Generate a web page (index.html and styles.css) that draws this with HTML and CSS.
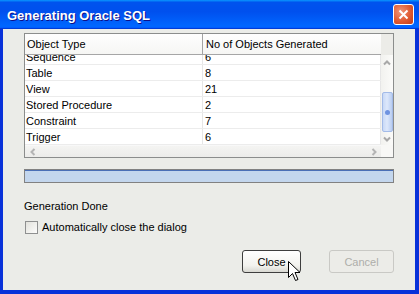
FILE: index.html
```html
<!DOCTYPE html>
<html lang="en">
  <head>
    <meta charset="UTF-8" />
    <title>Generating Oracle SQL</title>
    <link rel="stylesheet" href="styles.css">
  </head>
  <body>
    <div class="window">
      <div class="titlebar">
        <span class="title">Generating Oracle SQL</span>
        <div class="close-x">
          <svg width="11" height="11" viewBox="0 0 11 11">
            <path d="M1.5 1.5 L9.5 9.5 M9.5 1.5 L1.5 9.5" stroke="#fff" stroke-width="2" />
          </svg>
        </div>
      </div>
      <div class="content">
        <div class="table">
          <div class="table-main">
            <div class="thead">
              <div class="th col1">Object Type</div>
              <div class="th col2">No of Objects Generated</div>
            </div>
            <div class="tbody">
              <div class="rows">
                <div class="tr"><div class="td col1">Sequence</div><div class="td col2">6</div></div>
                <div class="tr"><div class="td col1">Table</div><div class="td col2">8</div></div>
                <div class="tr"><div class="td col1">View</div><div class="td col2">21</div></div>
                <div class="tr"><div class="td col1">Stored Procedure</div><div class="td col2">2</div></div>
                <div class="tr"><div class="td col1">Constraint</div><div class="td col2">7</div></div>
                <div class="tr"><div class="td col1">Trigger</div><div class="td col2">6</div></div>
              </div>
            </div>
            <div class="hscroll">
              <svg width="8" height="8" viewBox="0 0 8 8"><path d="M5.5 1 L2.5 4 L5.5 7" fill="none" stroke="#b4b4b4" stroke-width="2" /></svg>
              <svg width="8" height="8" viewBox="0 0 8 8"><path d="M2.5 1 L5.5 4 L2.5 7" fill="none" stroke="#b4b4b4" stroke-width="2" /></svg>
            </div>
          </div>
          <div class="vscroll">
            <div class="corner-top"></div>
            <div class="vtrack">
              <div class="arrow">
                <svg width="8" height="6" viewBox="0 0 8 6"><path d="M1 4.5 L4 1.5 L7 4.5" fill="none" stroke="#a8a8a8" stroke-width="2" /></svg>
              </div>
              <div class="thumb"><span class="grip"></span></div>
              <div class="arrow">
                <svg width="8" height="6" viewBox="0 0 8 6"><path d="M1 1.5 L4 4.5 L7 1.5" fill="none" stroke="#a8a8a8" stroke-width="2" /></svg>
              </div>
            </div>
            <div class="corner-bottom"></div>
          </div>
        </div>

        <div class="progress"><div class="progress-fill"></div></div>

        <div class="status">Generation Done</div>

        <label class="check-row">
          <span class="checkbox"></span>
          <span>Automatically close the dialog</span>
        </label>

        <div class="buttons">
          <button class="btn btn-close">Close</button>
          <button class="btn btn-cancel" disabled>Cancel</button>
        </div>
      </div>

      <svg class="cursor" width="13" height="21" viewBox="0 0 13 21">
        <path d="M0.5 0.5 L0.5 16.5 L4.5 12.5 L7.5 19.5 L10 18.5 L7 11.5 L12 11.5 Z" fill="#fff" stroke="#000" stroke-width="1" />
      </svg>
    </div>
  </body>
</html>
```

FILE: styles.css
```css
body {
  margin: 0;
  font-family: "Liberation Sans", Arial, sans-serif;
  font-size: 11px;
  color: #000;
}

.window {
  position: relative;
  width: 419px;
  height: 294px;
  display: flex;
  flex-direction: column;
  background: #0831d9;
  overflow: hidden;
}

.titlebar {
  height: 29px;
  flex: none;
  display: flex;
  align-items: center;
  justify-content: space-between;
  padding: 0 5px 0 7px;
  box-sizing: border-box;
  background: linear-gradient(180deg, #0997ff, #0053ee 8%, #0050ee 40%, #0066ff 88%, #0066ff 93%, #005bff 95%, #003dd7 96%, #003dd7);
}

.title {
  color: #fff;
  font-family: "Liberation Sans", Arial, sans-serif;
  font-weight: bold;
  font-size: 13px;
  text-shadow: 1px 1px #0f1089;
  margin-top: 1px;
}

.close-x {
  width: 19px;
  height: 19px;
  border: 1px solid #fff;
  border-radius: 3px;
  display: flex;
  align-items: center;
  justify-content: center;
  background: radial-gradient(circle at 35% 35%, #f0967a, #e05a32 55%, #c23b17);
  margin-top: -1px;
}

.content {
  flex: 1;
  margin: 0 4px 4px 3px;
  background: #ebece8;
  padding: 4px 21px 0 21px;
  display: flex;
  flex-direction: column;
}

/* table */

.table {
  display: flex;
  height: 123px;
  border: 1px solid #8b8d8c;
  background: #fff;
}

.table-main {
  width: 356px;
  display: flex;
  flex-direction: column;
}

.thead {
  display: flex;
  height: 20px;
  border-bottom: 1px solid #a6a6a6;
  background: linear-gradient(180deg, #fefefe, #f6f6f4);
}

.th {
  padding-left: 2px;
  line-height: 21px;
  box-sizing: border-box;
}

.th.col1 {
  width: 178px;
  border-right: 1px solid #a3a3a3;
}

.th.col2 {
  flex: 1;
  padding-left: 3px;
}

.tbody {
  height: 90px;
  overflow: hidden;
}

.rows {
  margin-top: -6px;
}

.tr {
  display: flex;
  height: 16px;
  border-bottom: 1px solid #ececec;
  box-sizing: border-box;
}

.td {
  padding-left: 1px;
  line-height: 17px;
  box-sizing: border-box;
}

.td.col1 {
  width: 178px;
  border-right: 1px solid #e6e6e6;
}

.td.col2 {
  flex: 1;
  padding-left: 2px;
  border-right: 1px solid #e6e6e6;
}

.hscroll {
  height: 12px;
  display: flex;
  align-items: center;
  justify-content: space-between;
  padding: 0 3px 0 4px;
  background: linear-gradient(180deg, #f4f4f2, #ececea);
  border-top: 1px solid #f8f8f8;
  box-sizing: border-box;
}

.vscroll {
  width: 12px;
  display: flex;
  flex-direction: column;
}

.corner-top {
  height: 21px;
  background: #ecece8;
  box-sizing: border-box;
}

.vtrack {
  height: 90px;
  display: flex;
  flex-direction: column;
  align-items: center;
  background: linear-gradient(90deg, #f2f2ef, #fbfbf9);
}

.arrow {
  height: 12px;
  display: flex;
  align-items: center;
  justify-content: center;
}

.arrow:first-child {
  margin-top: 2px;
  margin-bottom: 23px;
}

.arrow:last-child {
  margin-top: 1px;
}

.thumb {
  width: 11px;
  height: 41px;
  margin-left: 1px;
  box-sizing: border-box;
  border: 1px solid #a3bbe8;
  border-radius: 2px;
  background: linear-gradient(90deg, #c8d9f6, #dde8fb 45%, #b9cdf1);
  display: flex;
  align-items: center;
  justify-content: center;
}

.grip {
  width: 5px;
  height: 5px;
  border-radius: 50%;
  background: #6f93e0;
}

.corner-bottom {
  height: 12px;
  background: #f8f8f6;
}

/* progress */

.progress {
  margin-top: 11px;
  height: 14px;
  border: 1px solid #818181;
  box-sizing: border-box;
  background: #fff;
}

.progress-fill {
  height: 100%;
  background: #c3d6ed;
  border-top: 1px solid #4a6fb6;
  box-sizing: border-box;
}

.status {
  margin-top: 17px;
  line-height: 13px;
}

.check-row {
  display: flex;
  align-items: center;
  gap: 4px;
  margin-top: 8px;
  margin-left: 1px;
  line-height: 13px;
}

.checkbox {
  width: 13px;
  height: 13px;
  box-sizing: border-box;
  border: 1px solid #8f9090;
  background: linear-gradient(135deg, #e2e2dc, #fcfcfb);
}

.buttons {
  display: flex;
  justify-content: flex-end;
  gap: 28px;
  margin-top: 16px;
}

.btn {
  height: 23px;
  font-family: "Liberation Sans", Arial, sans-serif;
  font-size: 11px;
  border-radius: 3px;
  padding: 0;
}

.btn-close {
  width: 59px;
  border: 1px solid #3e3e3e;
  background: linear-gradient(180deg, #ffffff, #f2f2ee 70%, #d8d8d2);
  color: #000;
}

.btn-cancel {
  width: 65px;
  border: 1px solid #c9c9c5;
  background: #ecece8;
  color: #aeaeaa;
}

.cursor {
  position: absolute;
  left: 288px;
  top: 261px;
}
```
